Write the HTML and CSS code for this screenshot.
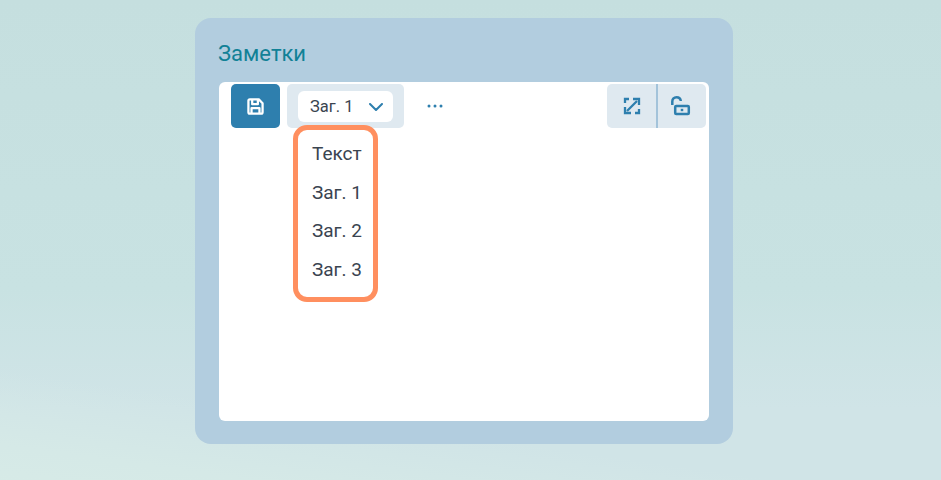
FILE: index.html
```html
<!DOCTYPE html>
<html lang="ru">
<head>
  <meta charset="UTF-8">
  <title>Заметки</title>
  <link rel="stylesheet" href="styles.css">
</head>
<body>
  <div class="card">
    <h2 class="card-title">Заметки</h2>
    <div class="editor">
      <div class="toolbar">
        <button class="save-btn">
          <svg width="17" height="17" viewBox="0 0 18 18" fill="none" stroke="#fff" stroke-width="2.4" stroke-linejoin="round">
            <path d="M1.5 3C1.5 2.2 2.2 1.5 3 1.5H12.5L16.5 5.5V15C16.5 15.8 15.8 16.5 15 16.5H3C2.2 16.5 1.5 15.8 1.5 15Z"/>
            <path d="M5.5 2V6.5H11.5V2"/>
            <path d="M4.8 16V10.8H13.2V16"/>
          </svg>
        </button>
        <div class="format-group">
          <div class="format-select">
            <span>Заг. 1</span>
            <svg width="14" height="8" viewBox="0 0 14 8" fill="none" stroke="#2e7fae" stroke-width="2" stroke-linecap="round" stroke-linejoin="round">
              <path d="M1 1L7 7L13 1"/>
            </svg>
          </div>
        </div>
        <button class="more-btn">
          <svg width="16" height="4" viewBox="0 0 16 4" fill="#2e7fae">
            <circle cx="2" cy="2" r="1.5"/>
            <circle cx="8" cy="2" r="1.5"/>
            <circle cx="14" cy="2" r="1.5"/>
          </svg>
        </button>
        <div class="right-group">
          <button class="tool-btn">
            <svg width="18" height="18" viewBox="0 0 18 18" fill="none" stroke="#2e7fae" stroke-width="2.3">
              <path d="M2 6V2H6"/>
              <path d="M16 12V16H12"/>
              <path d="M4 14L14 4"/>
              <path d="M10 2H16V8"/>
              <path d="M2 10V16H8"/>
            </svg>
          </button>
          <button class="tool-btn">
            <svg width="22" height="20" viewBox="0 0 22 20" fill="none" stroke="#2e7fae" stroke-width="2.5">
              <path d="M1.3 9V5.5C1.3 3 3 1.3 5.5 1.3C7.8 1.3 9.6 2.8 9.8 5"/>
              <rect x="4.2" y="10" width="13.6" height="8" rx="1"/>
              <path d="M11 12.8V15.2"/>
            </svg>
          </button>
        </div>
      </div>
      <ul class="format-menu">
        <li>Текст</li>
        <li>Заг. 1</li>
        <li>Заг. 2</li>
        <li>Заг. 3</li>
      </ul>
    </div>
  </div>
</body>
</html>
```

FILE: styles.css
```css
* { box-sizing: border-box; }

html, body {
  height: 100%;
}

body {
  margin: 0;
  padding: 18px 13px 0 0;
  display: flex;
  justify-content: center;
  align-items: flex-start;
  overflow: hidden;
  font-family: Roboto, sans-serif;
  color: #3a4450;
  background:
    linear-gradient(8deg, rgba(215, 235, 231, 0.9) 0, rgba(215, 235, 231, 0.7) 6%, rgba(215, 235, 231, 0) 18%),
    linear-gradient(180deg, #c5dfdf 0, #c8e2e2 60%, #d0e4e7 85%, #d0e4e7 100%);
}

button {
  border: none;
  padding: 0;
  display: flex;
  align-items: center;
  justify-content: center;
  cursor: pointer;
}

.card {
  width: 538px;
  height: 426px;
  padding: 23px 24px 23px;
  background: #b2cddf;
  border-radius: 16px;
  display: flex;
  flex-direction: column;
}

.card-title {
  margin: 0 0 15px -1px;
  font-size: 22px;
  line-height: 26px;
  font-weight: 400;
  color: #118196;
}

.editor {
  position: relative;
  flex: 1;
  background: #fff;
  border-radius: 6px;
}

.toolbar {
  display: flex;
  padding: 2px 3px 0 12px;
}

.save-btn {
  width: 49px;
  height: 44px;
  background: #2e7fae;
  border-radius: 5px;
}

.format-group {
  width: 117px;
  height: 44px;
  margin-left: 7px;
  padding: 7px 11px 6px;
  background: #dfe9f0;
  border-radius: 5px;
}

.format-select {
  height: 31px;
  padding: 0 10px 0 12px;
  display: flex;
  align-items: center;
  justify-content: space-between;
  background: #fff;
  border-radius: 6px;
  font-size: 16.5px;
}

.more-btn {
  width: 62px;
  height: 44px;
  background: none;
}

.right-group {
  margin-left: auto;
  display: flex;
  height: 44px;
  background: #dfe9f0;
  border-radius: 5px;
}

.tool-btn {
  width: 49px;
  height: 44px;
  background: none;
}

.tool-btn + .tool-btn {
  width: 50px;
  border-left: 2px solid #a3c3da;
}

.format-menu {
  position: absolute;
  left: 74px;
  top: 43px;
  width: 85px;
  height: 177px;
  margin: 0;
  padding: 5px 0 0 14px;
  list-style: none;
  background: #fff;
  border: 5px solid #ff8f5f;
  border-radius: 14px;
  font-size: 19px;
}

.format-menu li {
  height: 38.7px;
  line-height: 38px;
  white-space: nowrap;
}
```
